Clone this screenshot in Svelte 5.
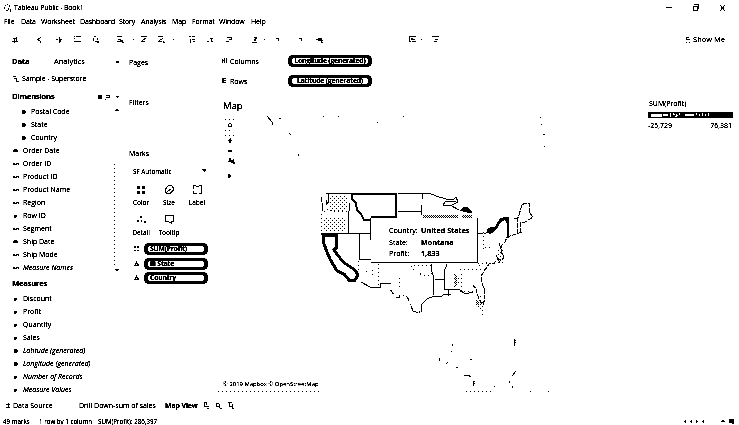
<script>
  const menus = [['File', 17], ['Data', 20], ['Worksheet', 39], ['Dashboard', 39], ['Story', 22], ['Analysis', 31], ['Map', 20], ['Format', 27], ['Window', 32], ['Help', 20]];
  const dims = [
    ['Postal Code', 'sq', 1], ['State', 'sq', 1], ['Country', 'sq', 1],
    ['Order Date', 'cal', 0], ['Order ID', 'abc', 0], ['Product ID', 'abc', 0], ['Product Name', 'abc', 0],
    ['Region', 'abc', 0], ['Row ID', 'hash', 0], ['Segment', 'abc', 0], ['Ship Date', 'cal', 0], ['Ship Mode', 'abc', 0],
    ['Measure Names', 'abc', 0, 1]
  ];
  const measures = [
    ['Discount', 'hash'], ['Profit', 'hash'], ['Quantity', 'hash'], ['Sales', 'hash'],
    ['Latitude (generated)', 'sq', 0, 1], ['Longitude (generated)', 'sq', 0, 1],
    ['Number of Records', 'hash', 0, 1], ['Measure Values', 'hash', 0, 1]
  ];
  const glyphs = {
    sq: 'M1 1h3v1h1v2h-1v1h-3z',
    cal: 'M1 1h3v1h1v2h-5v-2h1z',
    abc: 'M0 2h2v1h1v-1h3v2h-1v-1h-1v1h-4z',
    hash: 'M1 2h3v2h-1v1h-2z'
  };
  const tools = [
    [11, 'M2 3h3M3 2v5M5 1v4M1 6h6'],
    [35, 'M3 3h1M5 1v1M4 2v1M2 4h2M3 5h2M5 5v2'],
    [55, 'M1 4h2M4 1v6M4 4h3M5 3v3'],
    [73, 'M1 1h1M3 1h5M1 6h7M1 2v1'],
    [92, 'M2 1h2M1 2v3M5 2v2M3 6h4M5 7h2'],
    [116, 'M1 1h5M2 4h3M4 3v3M1 6h6M6 7h2M5 5h2'],
    [132, 'M1 4h1'],
    [140, 'M1 1h6M2 5l4-2M1 6h4M4 3h2'],
    [157, 'M1 1h5M2 5l4-2M1 6h4M6 5v2h2M3 4h2'],
    [172, 'M1 4h1'],
    [188, 'M1 1h2M4 1h3M2 3v4M4 4h3M5 6h2'],
    [206, 'M1 6h2M4 3h3M5 2v3M5 6h2'],
    [225, 'M1 6h3M2 2h5M4 4h2v-2'],
    [251, 'M1 7h5M3 5l3-3M3 2h2M4 1v4'],
    [263, 'M1 4h1'],
    [275, 'M1 3h2v2'],
    [298, 'M1 3h2v2'],
    [315, 'M1 4h5M3 2v3M4 3h2v4M6 7h2M4 5h4'],
    [408, 'M1 1h7M1 1v5h2M3 3l4 1M4 6h4M3 4h3'],
    [420, 'M1 4h1'],
    [431, 'M1 1h7M4 4h3M3 6h3']
  ];
</script>

{#snippet field([name, kind, indent, italic])}
  <div class="field" class:indent class:italic>
    <svg width="6" height="6"><path d={glyphs[kind]} /></svg><span>{name}</span>
  </div>
{/snippet}

<div class="app">
  <header class="title">
    <svg width="9" height="9"><path class="s" d="M4 1h1M2 2l1 1M6 2l1 2M1 4v2M3 7h2M5 5v2M7 6v2h1" /></svg>
    <span>Tableau Public - Book1</span>
    <svg class="win" width="64" height="9">
      <path class="s" d="M0 4.500h6M27 3.500h4v4h-4zM28 1.500h4v4M54 2l5 6M59 2l-5 6" />
    </svg>
  </header>
  <nav class="menu">{#each menus as [m, w]}<span style="width:{w}px">{m}</span>{/each}</nav>
  <div class="tools">
    <svg width="450" height="10">
      {#each tools as [x, d]}<path class="s" transform="translate({x} .5)" {d} />{/each}
    </svg>
    <div class="showme"><svg width="6" height="8"><path class="s" d="M1 1.500h3M1 3.500h4M1.500 1v3M1 6.500h1M4 6.500h1" /></svg><span>Show Me</span></div>
  </div>

  <main>
    <aside class="data">
      <div class="tabs"><b>Data</b><span>Analytics</span><i class="caret"></i></div>
      <div class="source"><svg width="7" height="8"><path class="s" d="M1 1.500h3M2 3.500h3M4.500 4v3M5 6.500h2" /></svg><span>Sample - Superstore</span></div>
      <div class="head"><b>Dimensions</b>
        <svg width="24" height="6"><path d="M2 1h4v4h-4zM20 2h3v1h-1v1h-1v-1h-1z" /><path class="s" d="M10 1.500h3v2h-3M9 5h1" /></svg>
      </div>
      <div class="dimlist">
        <div>{#each dims as d}{@render field(d)}{/each}</div>
        <svg width="8" height="169"><path d="M1 6l2-3l2 3zM1 164h4l-2 3z" /><path class="dots" d="M.5 58.500v104" /></svg>
      </div>
      <div class="head two"><b>Measures</b></div>
      {#each measures as m}{@render field(m)}{/each}
    </aside>

    <section class="cards">
      <div class="pages">Pages</div>
      <div class="filters">Filters</div>
      <div class="marks">Marks</div>
      <div class="auto"><span>SF Automatic</span><svg width="5" height="4"><path d="M0 0h4v1l-2 2l-2-2z" /></svg></div>
      <div class="buttons">
        <div><svg width="12" height="12"><path d="M2 2h3v3h-3zM7 2h3v3h-3zM2 7h3v3h-3zM7 7h3v3h-3z" /></svg><span>Color</span></div>
        <div><svg width="12" height="12"><path class="s" d="M5.500 1.500h3l1.500 2v3l-3 3h-3l-2-2v-2zM4 8l4-3" /></svg><span>Size</span></div>
        <div><svg width="12" height="12"><path class="s" d="M2.500 5v-3.500h2M5 2.500h3M8 1.500h2.500v3M10.500 5v4.500h-3M6 9.500h-3.500v-3" /></svg><span>Label</span></div>
        <div><svg width="12" height="12"><path d="M5 2h2v2h-2zM2 6h2v2h-2zM6 6h1v2h-1zM9 7h2v2h-2z" /></svg><span>Detail</span></div>
        <div><svg width="12" height="12"><path class="s" d="M2.500 1.500h8v6h-2v2l-3-2h-3z" /></svg><span>Tooltip</span></div>
      </div>
      <div class="pill-row"><svg width="6" height="6"><path d="M0 0h2v2h-2zM3 0h2v2h-2zM0 4h2v1h-2zM3 4h2v1h-2z" /></svg><div class="pill mark"><span>SUM(Profit)</span></div></div>
      <div class="pill-row"><svg width="6" height="6"><path d="M2 0h1v2h1v1h1v2h-5v-1h1v-2h1zM2 3v1h1v-1z" fill-rule="evenodd" /></svg><div class="pill mark"><span>⊞ State</span></div></div>
      <div class="pill-row"><svg width="6" height="6"><path d="M2 0h1v2h1v1h1v2h-5v-1h1v-2h1zM2 3v1h1v-1z" fill-rule="evenodd" /></svg><div class="pill mark"><span>Country</span></div></div>
    </section>

    <section class="sheet">
      <div class="shelf"><svg width="8" height="8"><path class="s" d="M1.500 2v4M3.500 1v5M5.500 1v5M1 3.500h2" /></svg><span>Columns</span><div class="pill"><span>Longitude (generated)</span></div></div>
      <div class="shelf"><svg width="8" height="8"><path d="M1 1h4v1h-2v1h2v1h-2v1h2v1h-4z" /></svg><span>Rows</span><div class="pill"><span>Latitude (generated)</span></div></div>
      <div class="view">
        <div class="viz">
          <h1>Map</h1>
          <svg class="map" width="425" height="279" viewBox="215 113 425 279">
            <defs>
              <pattern id="dot" width="4" height="4" patternUnits="userSpaceOnUse"><rect width="1" height="1" /><rect x="2" y="2" width="1" height="1" /></pattern>
              <pattern id="mesh" width="2" height="2" patternUnits="userSpaceOnUse"><rect width="1" height="1" /><rect x="1" y="1" width="1" height="1" /></pattern>
            </defs>
            <g class="ctl">
              <path class="dash" d="M225 119.500h10M225 130.500h5M225 135.500h10" />
              <path class="s" d="M228.500 126.500v-2l1.500-1.500l1.500 1.500v2zM228 140.500h4M230 138v5M228 151h4" />
              <path d="M228 150h4v2h-4zM229 158h2v2h2v-1h1v3h1v2h-2v-1h-2v-1h-3v-1h1zM228 174h2v1h1v2h-1v1h-2zM229 139h2v4h-2z" />
            </g>
            <path class="s" d="M267 116l5 6M272 122v3M279 118.500h2M323 116.500h1M338 116.500h1M377 122.500h1M289 133l2 2M298 156l1-2M403 116.500h1M540 117.500h1M541 124.500h1M543 134.500h2M544 146.500h1" />
            <path fill="url(#dot)" d="M329 196h19l-2 15h-17zM323 217h23v15h-23zM455 275h5v10h-5zM475 298l6-4l3 14v8h-2zM497 247h7v17h-7z" />
            <path fill="url(#mesh)" d="M423 215h35v3h-35zM462 215h10v3h-10zM455 275h2v11h-2zM476 301h3v4h-3z" />
            <path class="s" d="M326 193.500h26M328.500 193v9l-2 2v-4M321 197l1 5M322 203l1 8M321 233.500h49.500v6h13.500v20h-25v-26M350 203l-1 8l-1 4v18M370.500 218v16M398 193.500h31M398 211.500h24M361 282l9 5h10v-3l11-1M421 312v-7l6-6l7-3h8l2-2l7 1M429 193l7 3l10 3h8l2-2l2 5l-8 4l-7-1l3-4h10M422.500 194v5M421 205v10M450 205l9 5M431 264v5l2 6v10l1 10M435 279h9M447 264l-3 8v17M444 289h8M448 289v7M451 289l9 1l4 3h5l4-1" />
            <path class="dash" d="M324 212l5-3l5 3l7-1h9M321.500 214v19M378.500 240v46M359 261l-1 9M366 272l6-3v6l-2 3M390 290l7 7l5-2l5 2l4 9M399 278v10M411 266l3 4l8 5h8l4-4M414 265h18M483 232v19M485 247h7M478 263h18M487 262l-9 4M460 269h28M454 274v15M461 274v14M460 291h18" />
            <path class="coast" d="M391 290l2 4M396 297h4M407 297l2 3M411 306l2 5l6 2v-2M478 234l8-1l4-4M514 218h4l4-13l3-2h4v9l4 5l-8 5l-5 1v9h2l-15 5l-2 5l-3 3l-1 7l2 3v4l-3 1l-2-1l-4 4l-5 1l-4 6l-4 6v5l3 7l1 10l-2 7l-4-5l-3-11l-3-4M518 217l-1 18M499 243l3 9M496 255l4 8" />
            <path class="thick" d="M352 194h44v23h-24v1l-2 2h-6l-3-6l-4-4l-1-7l-4-4z" />
            <path class="ca" d="M323 235h13v13l-2 2l9 12l12 8l3 5l-3 5h-6l-5-6l-7-3l-7-12l-3-7l-3-8z" />
            <path d="M459 211l4-4h5l4 5v1h-5v-1h-3l-2-1zM487 233v-4l4-2h4l5-9l5-1h4v21h-2v-14l-2-4l-4 2l-3 5l-4 5l-4 2z" />
            <path fill="#fff" d="M497 230h8v2h-8zM502 222h3v7h-3z" />
            <path class="s" d="M453 344l-1 2M451 351v1M439 358v3M446 364l2-2M456 367h2M470 360l2-1M464 375.500h4l3 1M473.500 381v5M474 381.500h1M474 383.500h1M514.500 339v7M515 340.500h1M515 342.500h1M512 376l4-5M509 381v2M512 386v2M494 386v1" />
            <path class="dash" d="M218 391.500h104M466 391.500h28M530 391.500h1M548 391.500h1" />
            <text x="223" y="385.500">© 2019 Mapbox © OpenStreetMap</text>
          </svg>
          <div class="tooltip">
            <span>Country:</span><b>United States</b>
            <span>State:</span><b>Montana</b>
            <span>Profit:</span><b>1,833</b>
          </div>
        </div>
        <div class="legend">
          <span>SUM(Profit)</span>
          <svg width="85" height="6">
            <path d="M0 0h85v6h-85z" />
            <path fill="#fff" d="M3 2h11v3h-11zM15 2h5v2h-5zM22 1h1v4h-1zM37 2h9v2h-9z" />
            <path fill="#fff" d="M25 1h1v1h1v1h-2zM28 2h1v1h1v1h-2zM31 1h1v2h-1zM27 4h2v1h-2zM48 1h1v2h-1zM51 2h1v2h-1zM54 1h1v3h-1zM57 2h1v2h-1zM60 1h1v3h-1z" />
          </svg>
          <div><span>-25,729</span><span>76,381</span></div>
        </div>
      </div>
    </section>
  </main>

  <div class="sheets">
    <svg width="6" height="7"><path class="s" d="M1 2.500h4M3.500 1v4M1 5.500h4" /></svg><span class="ds">Data Source</span>
    <span class="dd">Drill Down-sum of sales</span><b>Map View</b>
    <svg width="34" height="9"><path class="s" d="M2 1.500h3M2.500 2v4M4.500 2v2M3 5.500h4M5 7.500h2M14 2.500h3M14.500 3v3M17.500 3v4M15 5.500h3M18 7.500h2M26 1.500h4M27.500 2v4M27 5.500h3M30.500 3v4M30 7.500h2" /></svg>
  </div>
  <footer>
    <span class="m">49 marks</span><span class="r">1 row by 1 column</span><span>SUM(Profit): 286,397</span>
    <svg width="52" height="7"><path d="M0 3h1v-1h1v3h-1v-1h-1zM6 3h1v-1h1v3h-1v-1h-1zM12 2h1v1h1v1h-1v1h-1zM18 3h1v-1h1v3h-1v-1h-1zM37 3h1v-1h2v1h1v1h-4zM45 1h5v5h-2v-1h-3z" /></svg>
  </footer>
</div>

<style>
  :global(body) { margin: 0; background: #fff; }
  .app { width: 739px; height: 425px; overflow: hidden; background: #fff; color: #000; display: flex; flex-direction: column; font: 7px/13px "Open Sans", "Noto Sans", sans-serif; white-space: nowrap; filter: brightness(.74) contrast(8); }
  svg { display: block; flex: none; shape-rendering: crispEdges; }
  b { letter-spacing: -.15px; }
  .s, .coast, .thick, .ca, .dash, .dots { fill: none; stroke: #000; stroke-width: 1; }
  .coast { stroke-dasharray: 5 1; }
  .dash { stroke-dasharray: 1 3; }
  .dots { stroke-dasharray: 1 3; }
  .thick { stroke-width: 2; }
  .ca { stroke-width: 3; }
  .title { height: 15px; display: flex; align-items: center; padding: 0 15px 0 3px; box-sizing: border-box; flex: none; gap: 2px; }
  .title span { letter-spacing: -.2px; }
  .win { margin-left: auto; width: 64px; margin-right: -6px; }
  .menu { height: 13px; display: flex; padding-left: 4px; flex: none; letter-spacing: -.15px; }
  .menu span { flex: none; }
  .tools { height: 23px; display: flex; align-items: center; justify-content: space-between; flex: none; }
  .showme { display: flex; align-items: center; gap: 2px; padding-right: 14px; font-size: 7.500px; }
  main { height: 347px; display: flex; flex: none; }
  .data { width: 122px; flex: none; }
  .tabs { height: 21px; padding: 4px 3px 0 12px; display: flex; font-size: 7.500px; box-sizing: border-box; }
  .tabs b { width: 42px; }
  .caret { width: 3px; height: 2px; background: #000; margin: 6px 0 0 auto; }
  .source { height: 13px; padding-left: 12px; display: flex; gap: 3px; align-items: center; letter-spacing: -.1px; }
  .head { height: 17px; padding: 3px 2px 0 12px; display: flex; align-items: center; justify-content: space-between; font-size: 7.700px; }
  .head b { letter-spacing: -.25px; }
  .head.two { height: 18px; padding-top: 0; }
  .dimlist { display: flex; justify-content: space-between; }
  .field { height: 13px; display: flex; align-items: center; padding-left: 13px; gap: 4px; }
  .indent { padding-left: 21px; }
  .italic span { font-style: italic; }
  .cards { width: 93px; flex: none; padding-left: 7px; box-sizing: border-box; }
  .pages { height: 40px; padding-top: 5px; box-sizing: border-box; }
  .filters { height: 51px; padding-top: 5px; box-sizing: border-box; }
  .marks { height: 20px; padding-top: 5px; box-sizing: border-box; }
  .auto { height: 18px; display: flex; justify-content: space-between; align-items: center; padding: 0 8px 0 4px; font-size: 6.300px; }
  .buttons { display: grid; grid-template-columns: 28px 28px 28px; grid-auto-rows: 30px; padding-top: 4px; height: 58px; font-size: 6.500px; }
  .buttons div { display: flex; flex-direction: column; align-items: center; width: 24px; }
  .pill-row { height: 14.500px; display: flex; align-items: center; gap: 4px; padding-left: 5px; }
  .pill { width: 84px; height: 12px; box-sizing: border-box; padding: 3px 4px; border-radius: 5px; background: #000; }
  .pill span { display: block; height: 6px; border-radius: 2px; background: #fff; text-align: center; font: bold 6.800px/6px "Open Sans", sans-serif; letter-spacing: -.2px; }
  .pill.mark { width: 64px; height: 12px; }
  .pill.mark span { text-align: left; padding-left: 2px; }
  .sheet { width: 524px; flex: none; }
  .shelf { height: 20px; display: flex; align-items: center; padding-left: 6px; }
  .shelf > span { width: 58px; padding-left: 1px; font-size: 7px; }
  .view { display: flex; justify-content: space-between; height: 307px; }
  .viz { width: 425px; position: relative; }
  h1 { margin: 0; height: 22px; padding: 8px 0 0 8px; box-sizing: border-box; font: 9.500px/14px "Open Sans", sans-serif; }
  .map text { font: 5.900px "Open Sans", sans-serif; }
  .tooltip { position: absolute; left: 156px; top: 127px; width: 107px; height: 45px; box-sizing: border-box; background: #fff; border-right: 1px solid #000; border-bottom: 1px solid #000; display: grid; grid-template-columns: 32px auto; grid-auto-rows: 11.500px; padding: 7px 0 0 18px; line-height: 10px; }
  .tooltip b { letter-spacing: 0; font-size: 7.200px; }
  .tooltip span { font-size: 7.200px; }
  .legend { width: 91px; padding-top: 5px; }
  .legend div { display: flex; justify-content: space-between; padding-right: 7px; line-height: 14px; }
  .legend span { display: block; line-height: 16px; }
  .legend > span { padding-left: 1px; }
  .sheets { height: 15px; display: flex; align-items: center; padding-left: 5px; flex: none; }
  .ds { margin-left: 2px; width: 66px; }
  .dd { width: 86px; }
  .sheets b { width: 37px; }
  footer { height: 12px; display: flex; align-items: center; padding: 2px 3px 0 3px; font-size: 6.200px; flex: none; }
  footer .m { width: 36px; }
  footer .r { width: 59px; }
  footer svg { margin-left: auto; }
</style>
